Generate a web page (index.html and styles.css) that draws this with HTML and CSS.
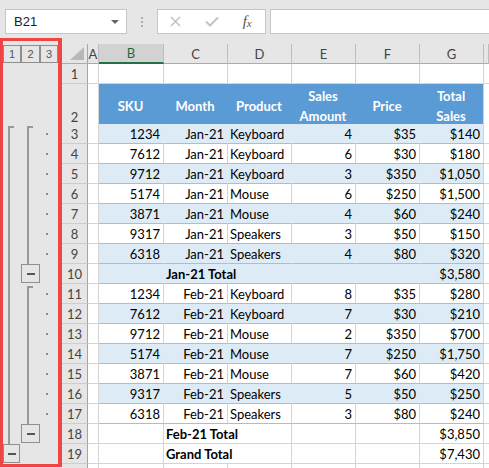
FILE: index.html
```html
<!DOCTYPE html>
<html>
<head>
<title>Subtotals</title>
<meta charset="UTF-8">
<meta name="viewport" content="width=device-width, initial-scale=1.0">
<link rel="stylesheet" href="styles.css">
</head>
<body>
<div class="toolbar">
  <div class="namebox"><span>B21</span><span class="arrow"></span></div>
  <div class="grip"></div>
  <div class="fxbox">
    <span class="tool"><svg width="11" height="11" viewBox="0 0 11 11"><path d="M1 1 L10 10 M10 1 L1 10" stroke="#bdbdbd" stroke-width="1.4" fill="none"/></svg></span>
    <span class="tool"><svg width="14" height="11" viewBox="0 0 14 11"><path d="M1 5.5 L5 9.5 L13 1.5" stroke="#c4c4c4" stroke-width="2" fill="none"/></svg></span>
    <span class="tool fx">f<small>x</small></span>
  </div>
  <div class="formula"></div>
</div>

<div class="main">
  <div class="outline">
    <div class="lvl">1</div>
    <div class="lvl">2</div>
    <div class="lvl">3</div>
    <div class="brk l1"></div>
    <div class="brk l2 jan"></div>
    <div class="minus l2 jan"></div>
    <div class="brk l2 feb"></div>
    <div class="minus l2 feb"></div>
    <div class="minus l1"></div>
    <div class="dots jan"></div>
    <div class="dots feb"></div>
  </div>

  <div class="sheet">
    <div class="row cols">
      <div class="corner"><span class="tri"></span></div>
      <div>A</div><div class="sel">B</div><div>C</div><div>D</div><div>E</div><div>F</div><div>G</div><div></div>
    </div>
    <div class="row">
      <div class="rh">1</div><div></div><div></div><div></div><div></div><div></div><div></div><div></div><div></div>
    </div>
    <div class="row tall head">
      <div class="rh">2</div><div></div>
      <div class="t">SKU</div><div class="t">Month</div><div class="t">Product</div><div class="t">Sales<br>Amount</div><div class="t">Price</div><div class="t">Total<br>Sales</div>
      <div></div>
    </div>
    <div class="row band">
      <div class="rh">3</div><div></div>
      <div class="t num">1234</div><div class="t num">Jan-21</div><div class="t">Keyboard</div><div class="t num">4</div><div class="t num">$35</div><div class="t num">$140</div>
      <div></div>
    </div>
    <div class="row plain">
      <div class="rh">4</div><div></div>
      <div class="t num">7612</div><div class="t num">Jan-21</div><div class="t">Keyboard</div><div class="t num">6</div><div class="t num">$30</div><div class="t num">$180</div>
      <div></div>
    </div>
    <div class="row band">
      <div class="rh">5</div><div></div>
      <div class="t num">9712</div><div class="t num">Jan-21</div><div class="t">Keyboard</div><div class="t num">3</div><div class="t num">$350</div><div class="t num">$1,050</div>
      <div></div>
    </div>
    <div class="row plain">
      <div class="rh">6</div><div></div>
      <div class="t num">5174</div><div class="t num">Jan-21</div><div class="t">Mouse</div><div class="t num">6</div><div class="t num">$250</div><div class="t num">$1,500</div>
      <div></div>
    </div>
    <div class="row band">
      <div class="rh">7</div><div></div>
      <div class="t num">3871</div><div class="t num">Jan-21</div><div class="t">Mouse</div><div class="t num">4</div><div class="t num">$60</div><div class="t num">$240</div>
      <div></div>
    </div>
    <div class="row plain">
      <div class="rh">8</div><div></div>
      <div class="t num">9317</div><div class="t num">Jan-21</div><div class="t">Speakers</div><div class="t num">3</div><div class="t num">$50</div><div class="t num">$150</div>
      <div></div>
    </div>
    <div class="row band">
      <div class="rh">9</div><div></div>
      <div class="t num">6318</div><div class="t num">Jan-21</div><div class="t">Speakers</div><div class="t num">4</div><div class="t num">$80</div><div class="t num">$320</div>
      <div></div>
    </div>
    <div class="row band">
      <div class="rh">10</div><div></div>
      <div class="t"></div><div class="t total">Jan-21 Total</div><div class="t"></div><div class="t"></div><div class="t num">$3,580</div>
      <div></div>
    </div>
    <div class="row plain">
      <div class="rh">11</div><div></div>
      <div class="t num">1234</div><div class="t num">Feb-21</div><div class="t">Keyboard</div><div class="t num">8</div><div class="t num">$35</div><div class="t num">$280</div>
      <div></div>
    </div>
    <div class="row band">
      <div class="rh">12</div><div></div>
      <div class="t num">7612</div><div class="t num">Feb-21</div><div class="t">Keyboard</div><div class="t num">7</div><div class="t num">$30</div><div class="t num">$210</div>
      <div></div>
    </div>
    <div class="row plain">
      <div class="rh">13</div><div></div>
      <div class="t num">9712</div><div class="t num">Feb-21</div><div class="t">Mouse</div><div class="t num">2</div><div class="t num">$350</div><div class="t num">$700</div>
      <div></div>
    </div>
    <div class="row band">
      <div class="rh">14</div><div></div>
      <div class="t num">5174</div><div class="t num">Feb-21</div><div class="t">Mouse</div><div class="t num">7</div><div class="t num">$250</div><div class="t num">$1,750</div>
      <div></div>
    </div>
    <div class="row plain">
      <div class="rh">15</div><div></div>
      <div class="t num">3871</div><div class="t num">Feb-21</div><div class="t">Mouse</div><div class="t num">7</div><div class="t num">$60</div><div class="t num">$420</div>
      <div></div>
    </div>
    <div class="row band">
      <div class="rh">16</div><div></div>
      <div class="t num">9317</div><div class="t num">Feb-21</div><div class="t">Speakers</div><div class="t num">5</div><div class="t num">$50</div><div class="t num">$250</div>
      <div></div>
    </div>
    <div class="row plain">
      <div class="rh">17</div><div></div>
      <div class="t num">6318</div><div class="t num">Feb-21</div><div class="t">Speakers</div><div class="t num">3</div><div class="t num">$80</div><div class="t num">$240</div>
      <div></div>
    </div>
    <div class="row">
      <div class="rh">18</div><div></div>
      <div></div><div class="total">Feb-21 Total</div><div></div><div></div><div class="num">$3,850</div>
      <div></div>
    </div>
    <div class="row">
      <div class="rh">19</div><div></div>
      <div></div><div class="total">Grand Total</div><div></div><div></div><div class="num">$7,430</div>
      <div></div>
    </div>
    <div class="row">
      <div class="rh"></div><div></div><div></div><div></div><div></div><div></div><div></div><div></div><div></div>
    </div>
  </div>
</div>
</body>
</html>
```

FILE: styles.css
```css
body{
    margin: 0;
    background: #e6e6e6;
    font-family: Lato, "Liberation Sans", sans-serif;
    font-size: 13px;
    color: #000;
    overflow: hidden;
}

/* formula bar */
.toolbar{
    display: flex;
    height: 38px;
    padding: 9px 0 4px 5px;
    box-sizing: border-box;
}
.namebox{
    width: 122px;
    background: #fff;
    border: 1px solid #c6c6c6;
    box-sizing: border-box;
    display: flex;
    align-items: center;
    justify-content: space-between;
    padding: 0 7px 0 8px;
    font-family: "Liberation Sans", sans-serif;
    font-size: 13px;
    color: #222;
}
.arrow{
    width: 0;
    height: 0;
    border-left: 4px solid transparent;
    border-right: 4px solid transparent;
    border-top: 4px solid #666;
}
.grip{
    width: 2px;
    height: 10px;
    margin: 8px 14px 0 14px;
    background: repeating-linear-gradient(#b0b0b0 0 2px, transparent 2px 4px);
}
.fxbox{
    width: 109px;
    background: #fff;
    border: 1px solid #c6c6c6;
    box-sizing: border-box;
    display: flex;
    align-items: center;
}
.tool{
    width: 36px;
    display: flex;
    justify-content: center;
}
.fx{
    font-family: "Liberation Serif", serif;
    font-style: italic;
    font-size: 15px;
    color: #555;
}
.fx small{
    font-size: 11px;
    margin-top: 4px;
}
.formula{
    flex: 1;
    margin: 0 -2px 0 4px;
    background: #fff;
    border: 1px solid #c6c6c6;
}

.main{
    display: flex;
    height: 430px;
}

/* outline pane */
.outline{
    width: 62px;
    height: 429px;
    box-sizing: border-box;
    border: 3px solid #ef4545;
    border-right-width: 4px;
    display: grid;
    grid-template-columns: 18px 19px 18px;
    grid-template-rows: 23px 20px 40px repeat(17, 20px);
}
.lvl{
    grid-row: 1;
    margin-top: 4px;
    height: 18px;
    border: 1px solid #8f8f8f;
    box-sizing: border-box;
    display: flex;
    align-items: center;
    justify-content: center;
    font-family: "Liberation Sans", sans-serif;
    font-size: 11px;
    color: #555;
}
.brk{
    justify-self: start;
    width: 6px;
    margin-top: 2px;
    border-left: 2px solid #999;
    border-top: 2px solid #999;
    box-sizing: border-box;
}
.brk.l1{
    grid-column: 1;
    grid-row: 4 / 20;
    margin-left: 5px;
}
.brk.l2{
    grid-column: 2;
    margin-left: 6px;
}
.minus{
    align-self: start;
    height: 19px;
    border: 1px solid #8f8f8f;
    box-sizing: border-box;
    display: flex;
    align-items: center;
    justify-content: center;
}
.minus::before{
    content: "";
    width: 8px;
    height: 2px;
    background: #555;
}
.minus.l1{
    grid-column: 1;
    grid-row: 20;
    width: 17px;
}
.minus.l2{
    grid-column: 2;
}
.brk.jan, .dots.jan{
    grid-row: 4 / 11;
}
.minus.jan{
    grid-row: 11;
}
.brk.feb, .dots.feb{
    grid-row: 12 / 19;
}
.minus.feb{
    grid-row: 19;
}
.dots{
    grid-column: 3;
    justify-self: start;
    width: 2px;
    margin-left: 6px;
    background: repeating-linear-gradient(transparent 0 9px, #8c8c8c 9px 11px, transparent 11px 20px);
}

/* sheet */
.sheet{
    flex: 1;
    padding-top: 6px;
    overflow: hidden;
}
.row{
    display: grid;
    grid-template-columns: 26px 11px 65px 64px 64px 64px 64px 64px 1fr;
    height: 20px;
}
.row.tall{
    height: 40px;
}
.row > div{
    box-sizing: border-box;
    min-width: 0;
    background: #fff;
    border-right: 1px solid #d4d4d4;
    border-bottom: 1px solid #d4d4d4;
    padding: 0 3px 0 2px;
    display: flex;
    align-items: flex-end;
    line-height: 18px;
    white-space: nowrap;
}
.row .num{
    justify-content: flex-end;
}
.row .total{
    grid-column: span 2;
    font-weight: bold;
}
.row .rh{
    background: #e6e6e6;
    border-right-color: #a5a5a5;
    border-bottom-color: #cdcdcd;
    justify-content: center;
    padding: 0;
    color: #444;
}
.cols > div{
    background: #e6e6e6;
    border-right-color: #bdbdbd;
    border-bottom-color: #ababab;
    justify-content: center;
    align-items: center;
    padding: 0;
    color: #444;
}
.cols .sel{
    background: #d2d2d2;
    border-bottom: 2px solid #217346;
    color: #1e6b42;
}
.cols .corner{
    justify-content: flex-end;
    align-items: flex-end;
    padding: 0 3px 3px 0;
    border-right-color: #a5a5a5;
}
.tri{
    width: 0;
    height: 0;
    border-left: 14px solid transparent;
    border-bottom: 13px solid #b8b8b8;
}

/* table styling */
.plain .t{
    border-bottom-color: #9bc2e6;
}
.band .t{
    background: #ddebf7;
    border-right-color: #ddebf7;
    border-bottom-color: #9bc2e6;
}
.head .t{
    background: #5b9bd5;
    border-right-color: #5b9bd5;
    border-bottom-color: #9bc2e6;
    color: #fff;
    font-weight: bold;
    justify-content: center;
    align-items: center;
    text-align: center;
    line-height: 20px;
    padding-top: 2px;
}
.band .t:nth-last-child(2), .head .t:nth-last-child(2){
    border-right-color: #c6d4e2;
}
```
